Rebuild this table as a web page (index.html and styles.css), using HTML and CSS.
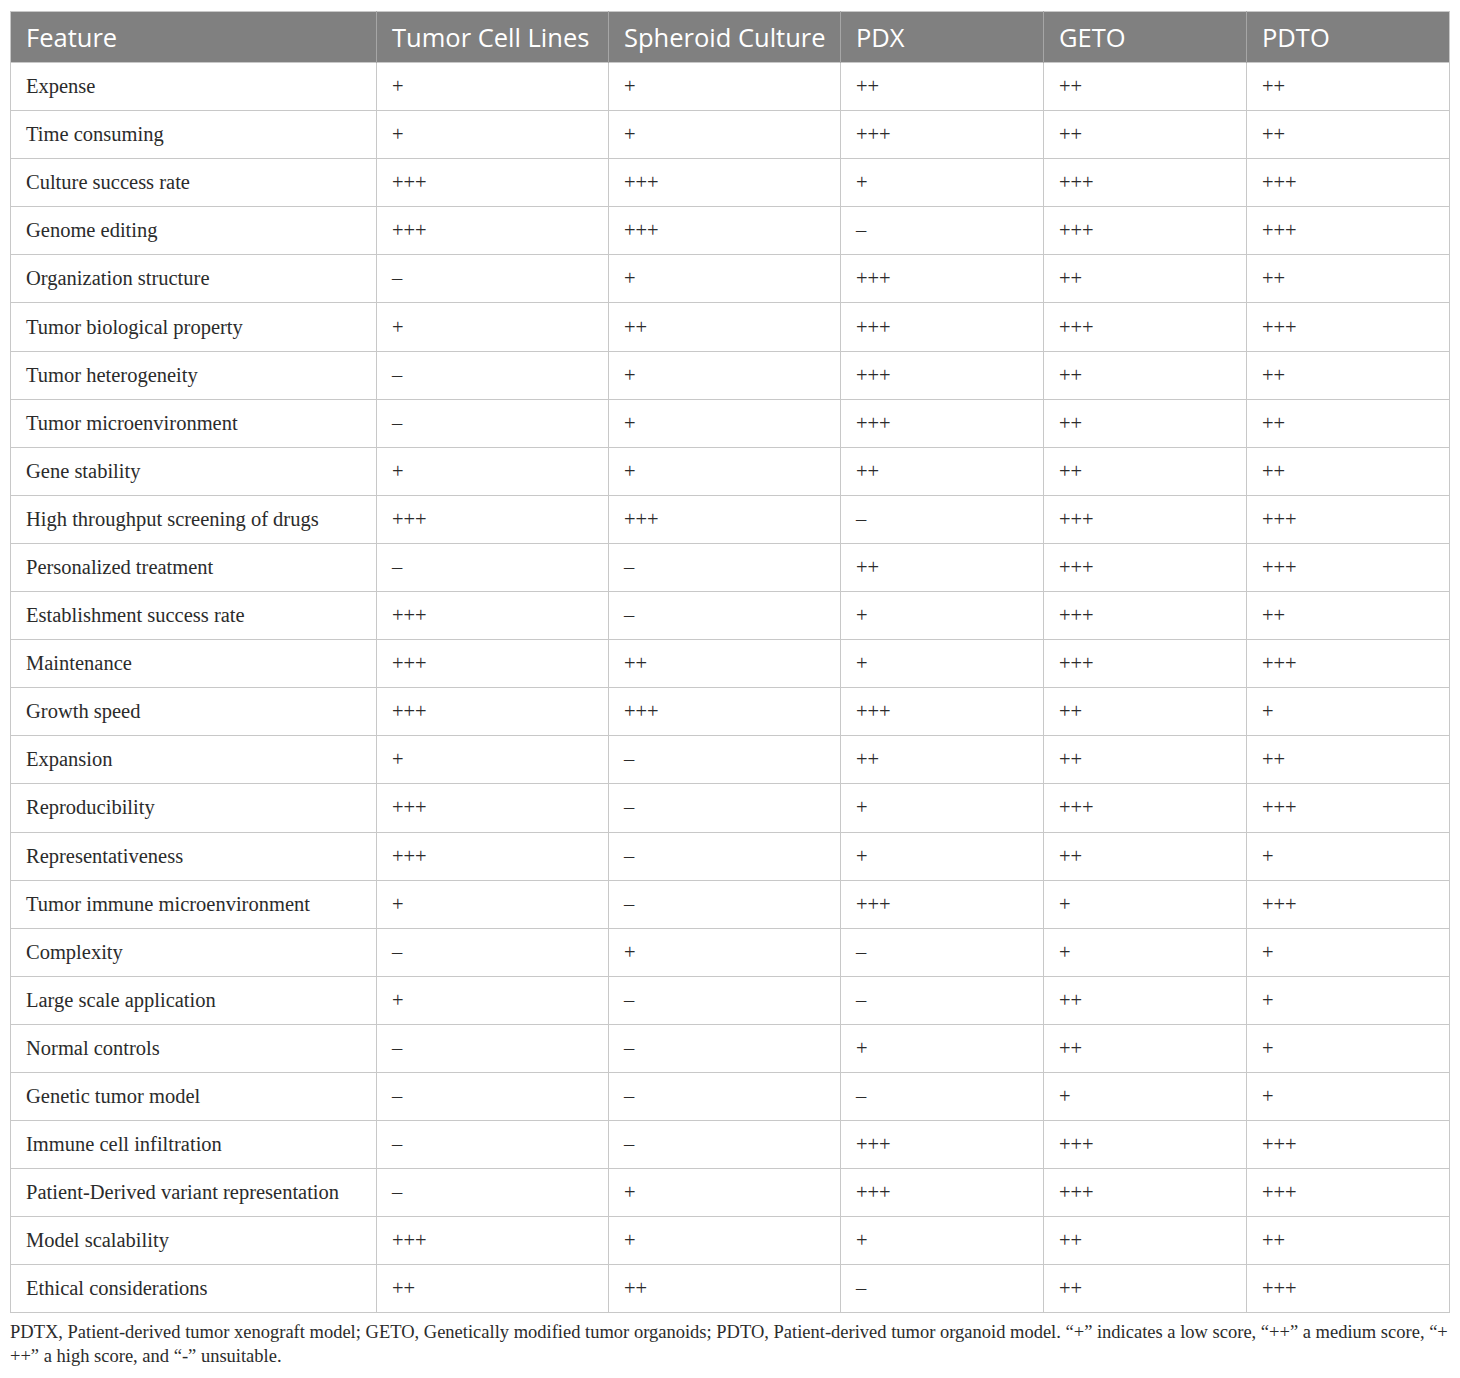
FILE: index.html
```html
<!DOCTYPE html>
<html>
<head>
<meta charset="utf-8">
<link rel="stylesheet" href="styles.css">
</head>
<body>
<div class="wrap">
<table class="tbl">
<colgroup>
<col class="c1"><col class="c2"><col class="c2"><col class="c3"><col class="c3"><col class="c3">
</colgroup>
<thead>
<tr><th>Feature</th><th>Tumor Cell Lines</th><th>Spheroid Culture</th><th>PDX</th><th>GETO</th><th>PDTO</th></tr>
</thead>
<tbody>
<tr><td>Expense</td><td>+</td><td>+</td><td>++</td><td>++</td><td>++</td></tr>
<tr><td>Time consuming</td><td>+</td><td>+</td><td>+++</td><td>++</td><td>++</td></tr>
<tr><td>Culture success rate</td><td>+++</td><td>+++</td><td>+</td><td>+++</td><td>+++</td></tr>
<tr><td>Genome editing</td><td>+++</td><td>+++</td><td>–</td><td>+++</td><td>+++</td></tr>
<tr><td>Organization structure</td><td>–</td><td>+</td><td>+++</td><td>++</td><td>++</td></tr>
<tr><td>Tumor biological property</td><td>+</td><td>++</td><td>+++</td><td>+++</td><td>+++</td></tr>
<tr><td>Tumor heterogeneity</td><td>–</td><td>+</td><td>+++</td><td>++</td><td>++</td></tr>
<tr><td>Tumor microenvironment</td><td>–</td><td>+</td><td>+++</td><td>++</td><td>++</td></tr>
<tr><td>Gene stability</td><td>+</td><td>+</td><td>++</td><td>++</td><td>++</td></tr>
<tr><td>High throughput screening of drugs</td><td>+++</td><td>+++</td><td>–</td><td>+++</td><td>+++</td></tr>
<tr><td>Personalized treatment</td><td>–</td><td>–</td><td>++</td><td>+++</td><td>+++</td></tr>
<tr><td>Establishment success rate</td><td>+++</td><td>–</td><td>+</td><td>+++</td><td>++</td></tr>
<tr><td>Maintenance</td><td>+++</td><td>++</td><td>+</td><td>+++</td><td>+++</td></tr>
<tr><td>Growth speed</td><td>+++</td><td>+++</td><td>+++</td><td>++</td><td>+</td></tr>
<tr><td>Expansion</td><td>+</td><td>–</td><td>++</td><td>++</td><td>++</td></tr>
<tr><td>Reproducibility</td><td>+++</td><td>–</td><td>+</td><td>+++</td><td>+++</td></tr>
<tr><td>Representativeness</td><td>+++</td><td>–</td><td>+</td><td>++</td><td>+</td></tr>
<tr><td>Tumor immune microenvironment</td><td>+</td><td>–</td><td>+++</td><td>+</td><td>+++</td></tr>
<tr><td>Complexity</td><td>–</td><td>+</td><td>–</td><td>+</td><td>+</td></tr>
<tr><td>Large scale application</td><td>+</td><td>–</td><td>–</td><td>++</td><td>+</td></tr>
<tr><td>Normal controls</td><td>–</td><td>–</td><td>+</td><td>++</td><td>+</td></tr>
<tr><td>Genetic tumor model</td><td>–</td><td>–</td><td>–</td><td>+</td><td>+</td></tr>
<tr><td>Immune cell infiltration</td><td>–</td><td>–</td><td>+++</td><td>+++</td><td>+++</td></tr>
<tr><td>Patient-Derived variant representation</td><td>–</td><td>+</td><td>+++</td><td>+++</td><td>+++</td></tr>
<tr><td>Model scalability</td><td>+++</td><td>+</td><td>+</td><td>++</td><td>++</td></tr>
<tr><td>Ethical considerations</td><td>++</td><td>++</td><td>–</td><td>++</td><td>+++</td></tr>
</tbody>
</table>
<p class="note">PDTX, Patient-derived tumor xenograft model; GETO, Genetically modified tumor organoids; PDTO, Patient-derived tumor organoid model. “+” indicates a low score, “++” a medium score, “+<br>++” a high score, and “-” unsuitable.</p>
</div>
</body>
</html>
```
FILE: styles.css
```css
html, body {
  margin: 0;
  padding: 0;
  background: #fff;
}
.wrap {
  padding: 11px 10px 0 10px;
}
.tbl {
  width: 1440px;
  border-collapse: collapse;
  table-layout: fixed;
  border: 1px solid #c8c8c8;
}
.c1 { width: 366px; }
.c2 { width: 232px; }
.c3 { width: 203px; }
.tbl th {
  background: #808080;
  color: #fff;
  font-family: "Open Sans", "Noto Sans", sans-serif;
  font-weight: 400;
  font-size: 25.5px;
  line-height: 30px;
  white-space: nowrap;
  text-align: left;
  height: 51px;
  padding: 0 14px 0 15px;
  border-left: 1px solid #a6a6a6;
  box-sizing: border-box;
  vertical-align: middle;
}
.tbl th:first-child { border-left: none; }
.tbl td {
  font-family: "Liberation Serif", "Times New Roman", serif;
  font-size: 20.5px;
  color: #2b2b2b;
  height: 48.1px;
  padding: 0 15px;
  border: 1px solid #c8c8c8;
  box-sizing: border-box;
  vertical-align: middle;
}
.note {
  margin: 7px 0 0 0;
  width: 1440px;
  font-family: "Liberation Serif", "Times New Roman", serif;
  font-size: 18.5px;
  line-height: 24px;
  color: #2b2b2b;
}
```
